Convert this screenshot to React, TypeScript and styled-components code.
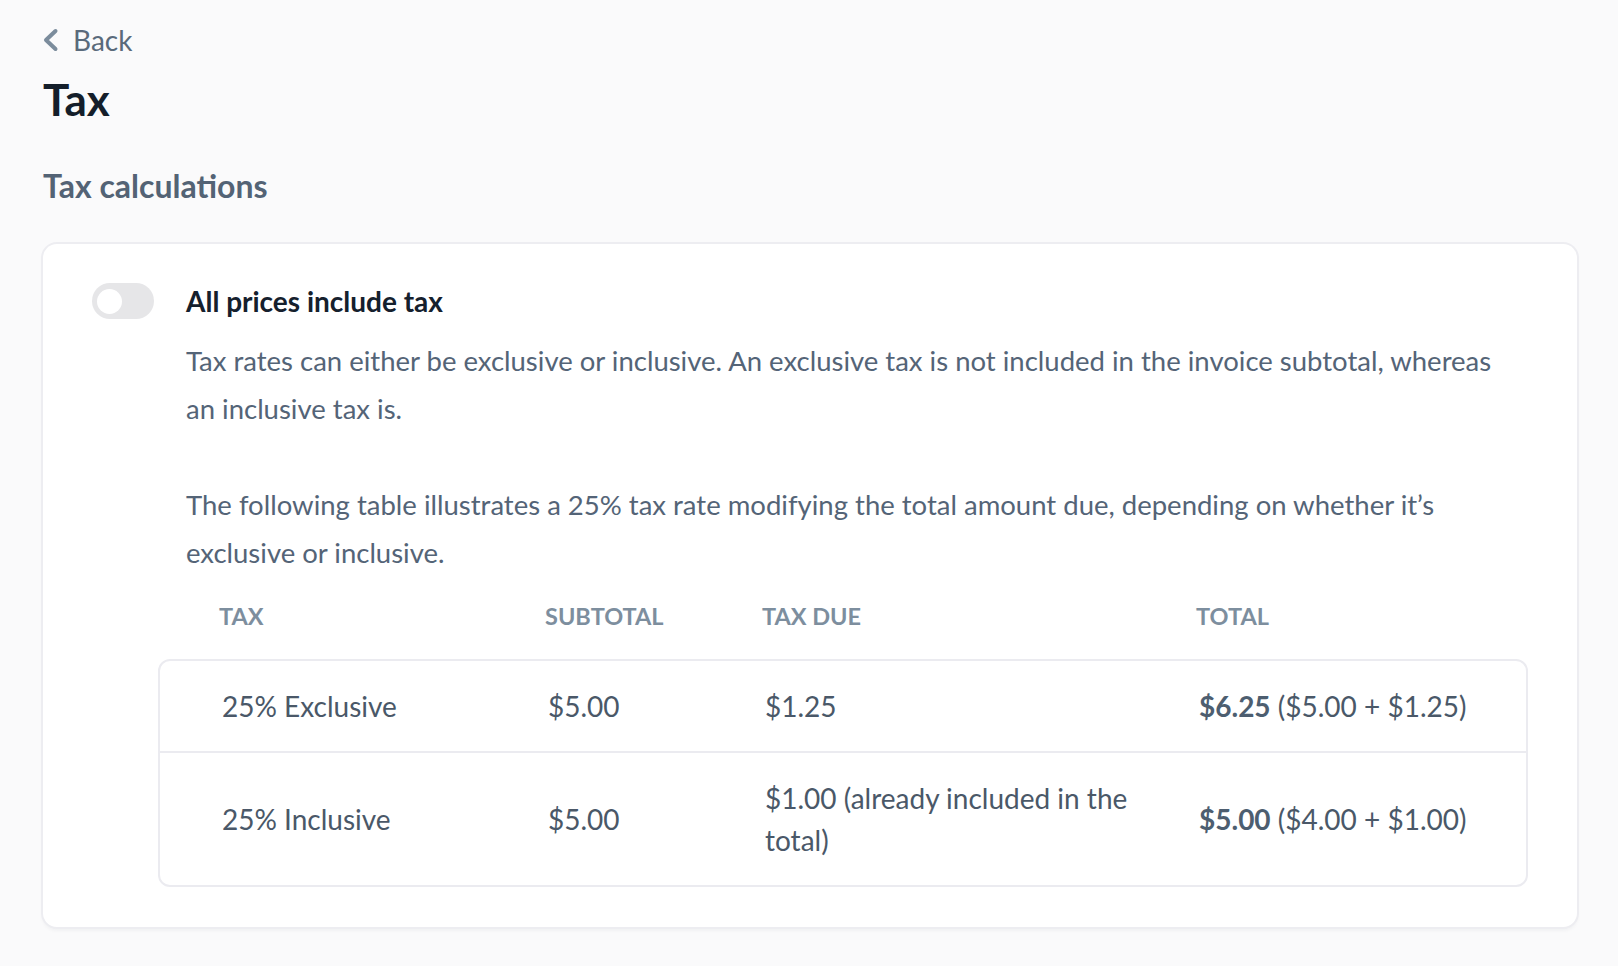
import React from "react";
import styled, { createGlobalStyle } from "styled-components";

const Global = createGlobalStyle`
  html, body { margin: 0; padding: 0; background: #fafafb; }
  body { font-family: Lato, "Open Sans", sans-serif; -webkit-font-smoothing: antialiased; }
  * { box-sizing: border-box; }
`;

const Page = styled.div`
  padding: 20px 41px 38px 42px;
  display: flex;
  flex-direction: column;
`;

const BackLink = styled.a`
  display: flex;
  align-items: center;
  gap: 13px;
  font-size: 28px;
  line-height: 40px;
  color: #5a6a7b;
  text-decoration: none;
  width: max-content;
`;

const Title = styled.h1`
  margin: 11px 0 0 1px;
  font-size: 44px;
  line-height: 56px;
  font-weight: 700;
  color: #141e2a;
`;

const SectionTitle = styled.h2`
  margin: 39px 0 0 1px;
  font-size: 32px;
  line-height: 40px;
  font-weight: 700;
  color: #536375;
`;

const Card = styled.section`
  margin: 38px 0 0 1px;
  background: #fff;
  border-radius: 14px;
  box-shadow: 0 0 0 2px #ededf1, 0 3px 4px rgba(20, 30, 50, 0.06);
  padding: 39px 49px 40px 49px;
  display: flex;
  flex-direction: column;
`;

const ToggleRow = styled.div`
  display: flex;
  align-items: flex-start;
  gap: 32px;
`;

const Switch = styled.span<{ $on?: boolean }>`
  flex: none;
  width: 62px;
  height: 36px;
  border-radius: 18px;
  background: ${(p) => (p.$on ? "#3b82f6" : "#e6e6e8")};
  display: flex;
  align-items: center;
  padding: 0 5px;
  justify-content: ${(p) => (p.$on ? "flex-end" : "flex-start")};
`;

const Knob = styled.span`
  width: 25px;
  height: 25px;
  border-radius: 50%;
  background: #fff;
`;

const Body = styled.div`
  display: flex;
  flex-direction: column;
  flex: 1;
  min-width: 0;
  padding-right: 12px;
`;

const OptionLabel = styled.div`
  font-size: 28px;
  line-height: 36px;
  font-weight: 700;
  color: #15202d;
`;

const Desc = styled.p<{ $gap: number }>`
  margin: ${(p) => p.$gap}px 0 0;
  font-size: 27.5px;
  line-height: 48px;
  color: #546477;
`;

const TableArea = styled.div`
  margin: 23px 0 0 66px;
  display: flex;
  flex-direction: column;
`;

const cols = "326px 217px 434px 1fr";

const HeadRow = styled.div`
  display: grid;
  grid-template-columns: ${cols};
  padding-left: 61px;
`;

const HeadCell = styled.div`
  font-size: 23.5px;
  line-height: 32px;
  font-weight: 700;
  color: #7d8e9e;
  text-transform: uppercase;
`;

const TableBox = styled.div`
  margin-top: 27px;
  border: 2px solid #ebebf0;
  border-radius: 12px;
  display: flex;
  flex-direction: column;
`;

const Row = styled.div<{ $first?: boolean }>`
  display: grid;
  grid-template-columns: ${cols};
  align-items: center;
  padding: 24px 0 24px 62px;
  border-top: ${(p) => (p.$first ? "none" : "2px solid #ebebf0")};
`;

const Cell = styled.div`
  font-size: 28px;
  line-height: 42px;
  color: #4a5868;
  padding-right: 48px;
`;

const Strong = styled.b`
  font-weight: 700;
  color: #4d5e70;
`;

const Chevron = () => (
  <svg width="18" height="24" viewBox="0 0 18 24" fill="none">
    <polyline
      points="13.5,3 4,12 13.5,21"
      stroke="#7b8c9c"
      strokeWidth="4"
      strokeLinecap="round"
      strokeLinejoin="round"
    />
  </svg>
);

const rows = [
  {
    tax: "25% Exclusive",
    subtotal: "$5.00",
    due: "$1.25",
    total: "$6.25",
    parts: "($5.00 + $1.25)",
  },
  {
    tax: "25% Inclusive",
    subtotal: "$5.00",
    due: "$1.00 (already included in the total)",
    total: "$5.00",
    parts: "($4.00 + $1.00)",
  },
];

export default function App() {
  return (
    <>
      <Global />
      <Page>
        <BackLink href="#">
          <Chevron />
          Back
        </BackLink>
        <Title>Tax</Title>
        <SectionTitle>Tax calculations</SectionTitle>
        <Card>
          <ToggleRow>
            <Switch>
              <Knob />
            </Switch>
            <Body>
              <OptionLabel>All prices include tax</OptionLabel>
              <Desc $gap={18}>
                Tax rates can either be exclusive or inclusive. An exclusive tax is not included in the
                invoice subtotal, whereas an inclusive tax is.
              </Desc>
              <Desc $gap={48}>
                The following table illustrates a 25% tax rate modifying the total amount due, depending
                on whether it’s exclusive or inclusive.
              </Desc>
            </Body>
          </ToggleRow>
          <TableArea>
            <HeadRow>
              <HeadCell>Tax</HeadCell>
              <HeadCell>Subtotal</HeadCell>
              <HeadCell>Tax due</HeadCell>
              <HeadCell>Total</HeadCell>
            </HeadRow>
            <TableBox>
              {rows.map((r, i) => (
                <Row key={r.tax} $first={i === 0}>
                  <Cell>{r.tax}</Cell>
                  <Cell>{r.subtotal}</Cell>
                  <Cell>{r.due}</Cell>
                  <Cell>
                    <Strong>{r.total}</Strong> {r.parts}
                  </Cell>
                </Row>
              ))}
            </TableBox>
          </TableArea>
        </Card>
      </Page>
    </>
  );
}
